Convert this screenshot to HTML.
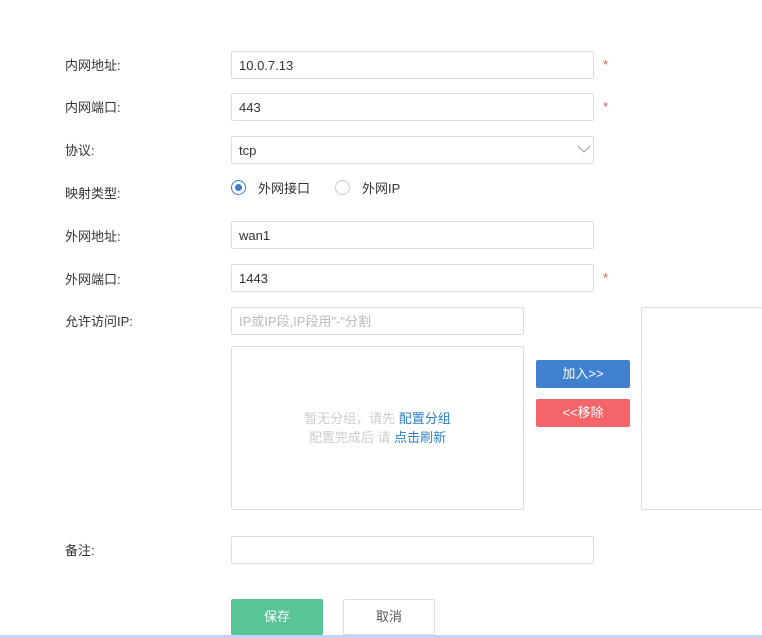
<!DOCTYPE html>
<html><head><meta charset="utf-8"><style>
*{margin:0;padding:0;box-sizing:border-box}
body{width:762px;height:638px;background:#fff;position:relative;overflow:hidden;font-family:"Liberation Sans","Noto Sans CJK SC",sans-serif;font-size:13px;color:#333}
.a{position:absolute}
.lb{position:absolute;left:65px;font-size:13px;color:#333}
.in{position:absolute;left:231px;width:363px;height:28px;border:1px solid #dcdcdc;border-radius:2px;padding-left:7px;line-height:27px;font-size:13px;color:#333}
.st{position:absolute;left:603px;color:#f05050;font-size:13px}
.btn{position:absolute;border-radius:2px;color:#fff;text-align:center;font-size:13px}
</style></head><body>
<div class="lb" style="top:55px">内网地址:</div>
<div class="in" style="top:51px">10.0.7.13</div><div class="st" style="top:57px">*</div>
<div class="lb" style="top:97px">内网端口:</div>
<div class="in" style="top:93px">443</div><div class="st" style="top:99px">*</div>
<div class="lb" style="top:140px">协议:</div>
<div class="in" style="top:136px">tcp</div>
<svg class="a" style="left:577px;top:144px" width="14" height="10"><path d="M1 2 L7 8 L13 2" fill="none" stroke="#999" stroke-width="1"/></svg>
<div class="lb" style="top:183px">映射类型:</div>
<div class="a" style="left:231px;top:180px;width:15px;height:15px;border:1px solid #3a7fd0;border-radius:50%"><div style="margin:3px;width:7px;height:7px;border-radius:50%;background:#3a7fd0"></div></div>
<div class="a" style="left:258px;top:178px">外网接口</div>
<div class="a" style="left:335px;top:180px;width:15px;height:15px;border:1px solid #ccc;border-radius:50%"></div>
<div class="a" style="left:362px;top:178px">外网IP</div>
<div class="lb" style="top:226px">外网地址:</div>
<div class="in" style="top:221px">wan1</div>
<div class="lb" style="top:269px">外网端口:</div>
<div class="in" style="top:264px">1443</div><div class="st" style="top:270px">*</div>
<div class="lb" style="top:311px">允许访问IP:</div>
<div class="in" style="top:307px;width:293px;color:#bbb">IP或IP段,IP段用"-"分割</div>
<div class="a" style="left:231px;top:346px;width:293px;height:164px;border:1px solid #dcdcdc;border-radius:2px;text-align:center;color:#ccc;padding-top:62px;line-height:19px">暂无分组，请先 <span style="color:#2f7fc8">配置分组</span><br>配置完成后 请 <span style="color:#2f7fc8">点击刷新</span></div>
<div class="btn" style="left:536px;top:360px;width:94px;height:28px;line-height:28px;background:#3f80cf">加入&gt;&gt;</div>
<div class="btn" style="left:536px;top:399px;width:94px;height:28px;line-height:28px;background:#f36569">&lt;&lt;移除</div>
<div class="a" style="left:641px;top:307px;width:130px;height:203px;border:1px solid #dcdcdc;border-radius:2px"></div>
<div class="lb" style="top:540px">备注:</div>
<div class="in" style="top:536px"></div>
<div class="btn" style="left:231px;top:599px;width:92px;height:36px;line-height:36px;background:#58c395">保存</div>
<div class="btn" style="left:343px;top:599px;width:92px;height:36px;line-height:34px;border:1px solid #dcdcdc;color:#555">取消</div>
<div class="a" style="left:0;top:635px;width:762px;height:3px;background:#c3d3f5"></div>
</body></html>
